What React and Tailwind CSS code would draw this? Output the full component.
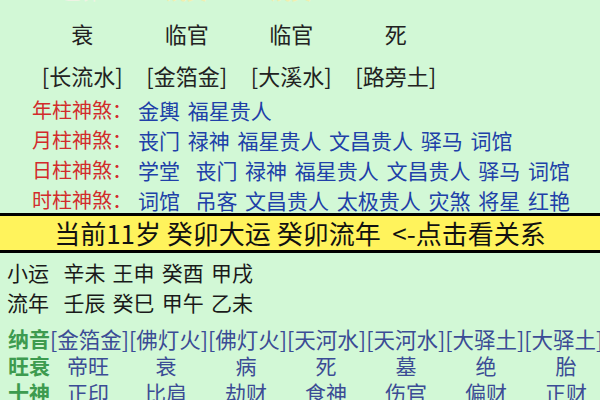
// 八字排盘 – 神煞 / 大运 / 纳音 panel
const cjk = "font-['Noto_Sans_CJK_SC','Noto_Sans',sans-serif]";

const topRow = ["衰", "临官", "临官", "死"];
const naYinTop = ["[长流水]", "[金箔金]", "[大溪水]", "[路旁土]"];

const shenSha = [
  { label: "年柱神煞", items: "金輿 福星贵人" },
  { label: "月柱神煞", items: "丧门 禄神 福星贵人 文昌贵人 驿马 词馆" },
  { label: "日柱神煞", items: "学堂  丧门 禄神 福星贵人 文昌贵人 驿马 词馆" },
  { label: "时柱神煞", items: "词馆  吊客 文昌贵人 太极贵人 灾煞 将星 红艳" },
];

const wangShuai = ["帝旺", "衰", "病", "死", "墓", "绝", "胎"];
const shiShen = ["正印", "比肩", "劫财", "食神", "伤官", "偏财", "正财"];

const Row = ({ label, cells }) => (
  <div className="flex h-[27px] items-center pl-[8px] leading-[27px]">
    <span className="w-[42px] shrink-0 whitespace-nowrap text-[21px] font-semibold text-[#3d9b4f]">
      {label}
    </span>
    {cells.map((c, i) => (
      <span
        key={i}
        className={`${i === 0 ? "w-[76px]" : "w-[80px]"} shrink-0 text-center text-[21px] text-[#3b4c95]`}
      >
        {c}
      </span>
    ))}
  </div>
);

export default function App() {
  return (
    <div className={`w-[600px] h-[400px] overflow-hidden bg-[#d2f8d6] ${cjk}`}>
      {/* clipped header from the row above */}
      <div className="h-[4px] overflow-hidden">
        <div className="-mt-[19px] grid grid-cols-[104.5px_104.5px_104.5px_104.5px] pl-[30px] text-[20px] leading-[22px]">
          <span className="text-center text-[#eef3e4]">乙卯</span>
          <span className="text-center text-[#f2efb0]">戊寅</span>
          <span className="text-center text-[#f2efb0]">戊寅</span>
          <span className="text-center text-[#d2f8d6]">丙子</span>
        </div>
      </div>

      <div className="mt-[14px] grid grid-cols-[104.5px_104.5px_104.5px_104.5px] pl-[30px] text-[22px] leading-[30px] text-[#222]">
        {topRow.map((t, i) => (
          <span key={i} className="text-center">{t}</span>
        ))}
      </div>

      <div className="mt-[12px] grid grid-cols-[104.5px_104.5px_104.5px_104.5px] pl-[30px] text-[22px] leading-[30px] text-[#222]">
        {naYinTop.map((t, i) => (
          <span key={i} className="text-center whitespace-nowrap">{t}</span>
        ))}
      </div>

      {/* 神煞 */}
      <div className="mt-[5px] flex flex-col pl-[32px] leading-[30px]">
        {shenSha.map((r) => (
          <div key={r.label} className="flex items-center whitespace-pre">
            <span className="w-[106px] shrink-0 text-[20px] text-[#d22b2b]">{r.label}：</span>
            <span className="text-[21px] [word-spacing:3px] text-[#2040a8]">{r.items}</span>
          </div>
        ))}
      </div>

      {/* 当前大运 bar */}
      <div className="-mt-[2px] flex h-[40px] items-center justify-center border-y-[3px] border-black bg-[#fff35c] text-[26px] leading-[34px] whitespace-pre text-[#111]">
        当前11岁 癸卯大运 癸卯流年  {"<-"}点击看关系
      </div>

      <div className="mt-[4px] pl-[7px] text-[21px] leading-[30px] whitespace-pre [word-spacing:2.5px] text-[#1a1a1a]">
        <div>小运  辛未 王申 癸酉 甲戌</div>
        <div>流年  壬辰 癸巳 甲午 乙未</div>
      </div>

      <div className="mt-[8px]">
        <div className="flex h-[27px] items-center whitespace-nowrap pl-[8px] leading-[27px]">
          <span className="text-[21px] font-semibold text-[#3d9b4f]">纳音</span>
          <span className="text-[21.5px] text-[#3b4c95]">
            [金箔金][佛灯火][佛灯火][天河水][天河水][大驿土][大驿土]
          </span>
        </div>
        <Row label="旺衰" cells={wangShuai} />
        <Row label="十神" cells={shiShen} />
      </div>
    </div>
  );
}
